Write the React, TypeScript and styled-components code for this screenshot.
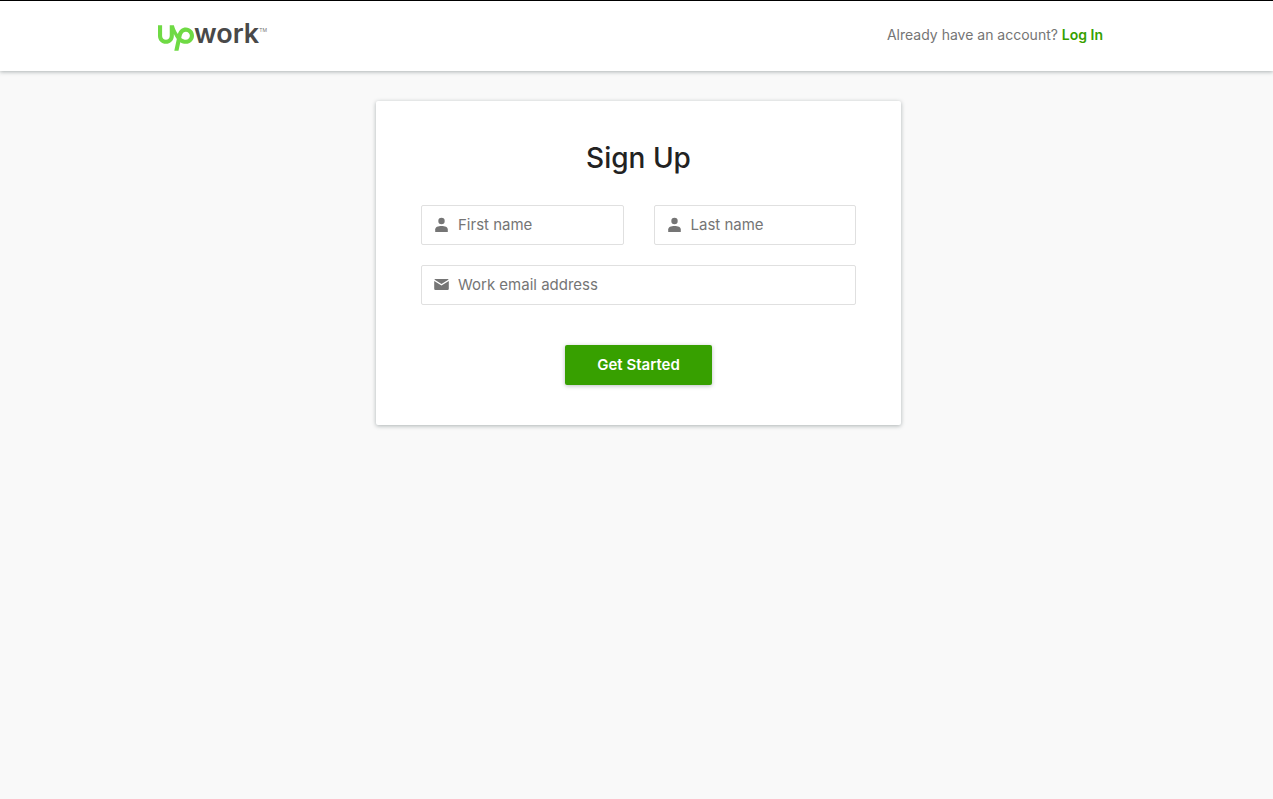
import React from "react";
import styled, { createGlobalStyle } from "styled-components";

const GlobalStyle = createGlobalStyle`
  *, *::before, *::after { box-sizing: border-box; }
  body {
    margin: 0;
    background: #f9f9f9;
    color: #222;
    font-family: Inter, "Liberation Sans", sans-serif;
  }
`;

const Header = styled.header`
  border-top: 1px solid #000;
  background: #fff;
  box-shadow: 0 1px 4px rgba(57, 73, 76, 0.4);
`;

const HeaderContent = styled.div`
  display: flex;
  align-items: flex-start;
  justify-content: space-between;
  max-width: 957px;
  height: 70px;
  margin: 0 auto;
  padding-right: 12px;
`;

const Logo = styled.a`
  display: flex;
  align-items: flex-start;
  padding-top: 16px;
  color: #494949;
  text-decoration: none;
`;

const LogoMark = styled.svg`
  width: 36px;
  height: 26px;
  margin-top: 8px;
  fill: #6fda44;
`;

const LogoWord = styled.span`
  font-size: 27px;
  line-height: 34px;
  font-weight: 600;
`;

const Trademark = styled.span`
  padding-top: 8px;
  font-size: 5px;
  line-height: 10px;
  color: #777;
`;

const LoginPrompt = styled.p`
  margin: 0;
  padding-top: 24px;
  font-size: 14px;
  line-height: 20px;
  color: #757575;
`;

const LoginLink = styled.a`
  color: #37a000;
  font-weight: 600;
  text-decoration: none;
`;

const Main = styled.main`
  padding: 30px 0 30px 4px;
`;

const Card = styled.form`
  display: flex;
  flex-direction: column;
  max-width: 525px;
  margin: 0 auto;
  padding: 40px 45px;
  border-radius: 2px;
  background: #fff;
  box-shadow: 0 1px 4px rgba(57, 73, 76, 0.4);
`;

const Title = styled.h1`
  margin: 0 0 30px;
  font-size: 28px;
  line-height: 34px;
  font-weight: 500;
  text-align: center;
`;

const Fields = styled.div`
  display: grid;
  grid-template-columns: repeat(2, minmax(0, 1fr));
  gap: 20px 30px;
`;

const Field = styled.label<{ $wide?: boolean }>`
  display: flex;
  align-items: center;
  gap: 8px;
  height: 40px;
  padding: 0 12px;
  border: 1px solid #e0e0e0;
  border-radius: 2px;
  grid-column: ${(p) => (p.$wide ? "1 / -1" : "auto")};
`;

const FieldIcon = styled.svg`
  flex: none;
  width: 16px;
  height: 16px;
  fill: #757575;
`;

const FieldInput = styled.input`
  flex: 1;
  width: 100%;
  min-width: 0;
  padding: 0;
  border: 0;
  outline: 0;
  background: transparent;
  color: #222;
  font-family: inherit;
  font-size: 15px;
  line-height: 20px;
  &::placeholder { color: #757575; opacity: 1; }
`;

const SubmitButton = styled.button`
  align-self: center;
  height: 40px;
  margin-top: 40px;
  padding: 0 32px;
  border: 0;
  border-radius: 2px;
  background: #37a000;
  box-shadow: 0 1px 4px rgba(57, 73, 76, 0.35);
  color: #fff;
  font-family: inherit;
  font-size: 15px;
  line-height: 20px;
  font-weight: 600;
  cursor: pointer;
`;

const PersonIcon = () => (
  <FieldIcon viewBox="0 0 16 16" aria-hidden="true">
    <circle cx="7.500" cy="4" r="3.200" />
    <path d="M1.200 15v-2.500C1.200 10.100 4 9 7.500 9s6.300 1.100 6.300 3.500V15z" />
  </FieldIcon>
);

const MailIcon = () => (
  <FieldIcon viewBox="0 0 16 16" aria-hidden="true">
    <path d="M1.300 2h12.400a1.200 1.200 0 0 1 1 .6L7.500 7 .3 2.600A1.200 1.200 0 0 1 1.300 2zM.2 4l7.300 4.600L14.800 4v7.800a1.200 1.200 0 0 1-1.200 1.200H1.400A1.200 1.200 0 0 1 .2 11.800z" />
  </FieldIcon>
);

export default function App() {
  return (
    <>
      <GlobalStyle />
      <Header>
        <HeaderContent>
          <Logo href="#">
            <LogoMark viewBox="0 3.49 24 17.02" aria-label="up" role="img">
              <path d="M18.561 13.158c-1.102 0-2.135-.467-3.074-1.227l.228-1.076.008-.042c.207-1.143.849-3.06 2.839-3.06 1.492 0 2.703 1.212 2.703 2.703-.001 1.489-1.212 2.702-2.704 2.702zm0-8.14c-2.539 0-4.51 1.649-5.31 4.366-1.22-1.834-2.148-4.036-2.687-5.892H7.828v7.112c-.002 1.406-1.141 2.546-2.547 2.548-1.405-.002-2.543-1.143-2.545-2.548V3.492H0v7.112c0 2.914 2.37 5.303 5.281 5.303 2.913 0 5.283-2.389 5.283-5.303v-1.19c.529 1.107 1.182 2.229 1.974 3.221l-1.673 7.873h2.797l1.213-5.71c1.063.679 2.285 1.109 3.686 1.109 3 0 5.439-2.452 5.439-5.45 0-3-2.439-5.439-5.439-5.439z" />
            </LogoMark>
            <LogoWord>work</LogoWord>
            <Trademark>TM</Trademark>
          </Logo>
          <LoginPrompt>
            Already have an account? <LoginLink href="#">Log In</LoginLink>
          </LoginPrompt>
        </HeaderContent>
      </Header>
      <Main>
        <Card>
          <Title>Sign Up</Title>
          <Fields>
            <Field>
              <PersonIcon />
              <FieldInput type="text" aria-label="First name" placeholder="First name" />
            </Field>
            <Field>
              <PersonIcon />
              <FieldInput type="text" aria-label="Last name" placeholder="Last name" />
            </Field>
            <Field $wide>
              <MailIcon />
              <FieldInput type="email" aria-label="Work email address" placeholder="Work email address" />
            </Field>
          </Fields>
          <SubmitButton type="button">Get Started</SubmitButton>
        </Card>
      </Main>
    </>
  );
}
